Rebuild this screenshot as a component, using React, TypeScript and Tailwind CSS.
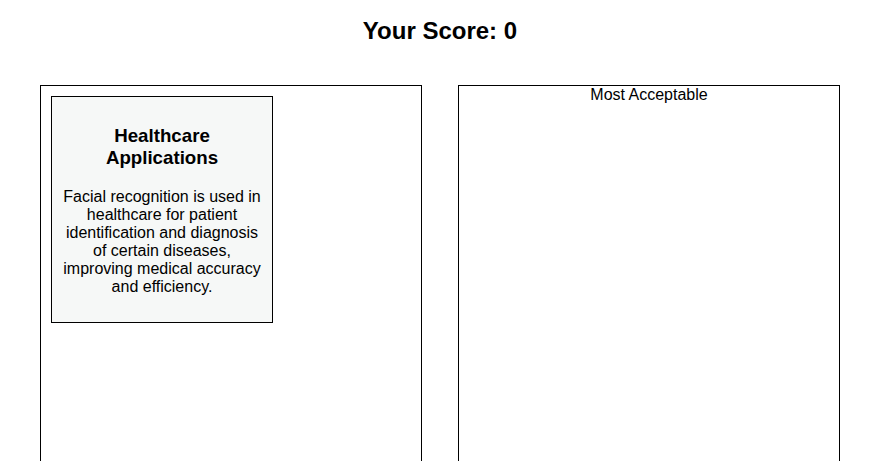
export default function App() {
  return (
    <div className="min-h-screen bg-white text-black font-['Liberation_Sans',Arial,sans-serif]">
      <h1 className="pt-[17px] pl-[5px] text-center text-[24px] leading-[28px] font-bold">Your Score: 0</h1>

      <div className="mt-[40px] flex gap-[36px] pl-[40px]">
        <div className="w-[382px] h-[400px] border border-black p-[10px]">
          <div className="w-[222px] border border-black bg-[#f6f8f7] px-[10px] pt-[28px] pb-[26px] text-center">
            <h3 className="text-[18.72px] leading-[22px] font-bold">Healthcare Applications</h3>
            <p className="mt-[19px] text-[16px] leading-[18px]">
              Facial recognition is used in healthcare for patient identification and diagnosis of certain diseases,
              improving medical accuracy and efficiency.
            </p>
          </div>
        </div>

        <div className="w-[382px] h-[400px] border border-black text-center">
          <p className="text-[16px] leading-[18px]">Most Acceptable</p>
        </div>
      </div>
    </div>
  );
}
